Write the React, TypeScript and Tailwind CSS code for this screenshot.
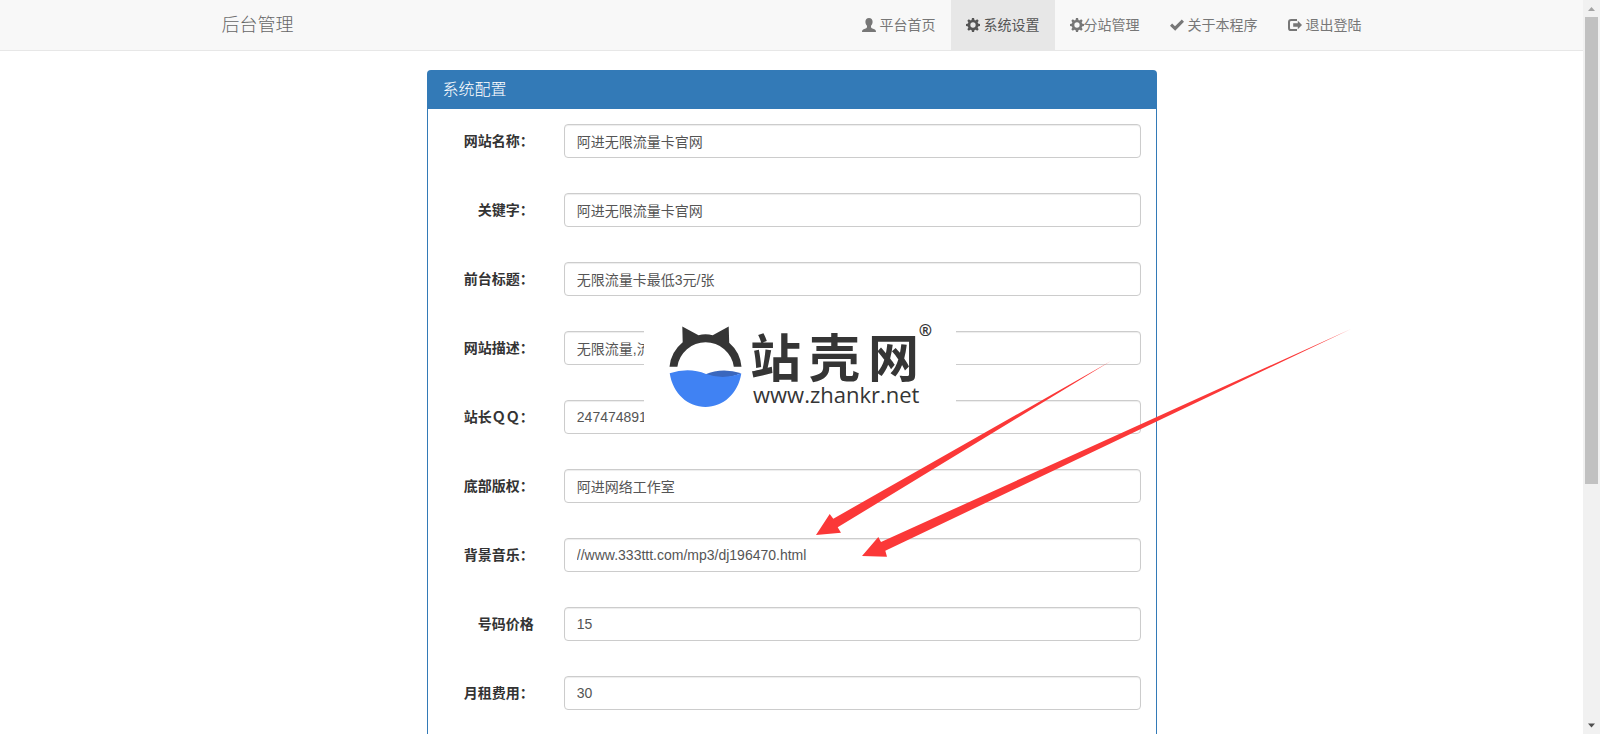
import { useState } from 'react';

type IconProps = { className?: string };

function UserIcon({ className }: IconProps) {
  return (
    <svg viewBox="0 0 14 14" fill="currentColor" className={className} aria-hidden="true">
      <path d="M7 0C9.200 0 10.600 1.500 10.600 3.700C10.600 5.400 9.900 6.800 9 7.700V8.900C9 9.600 9.500 10 10.400 10.400L12.400 11.300C13.500 11.800 14 12.300 14 14H0C0 12.300 .5 11.800 1.600 11.300L3.600 10.400C4.500 10 5 9.600 5 8.900V7.700C4.100 6.800 3.400 5.400 3.400 3.700C3.400 1.500 4.800 0 7 0Z" />
    </svg>
  );
}

function CogIcon({ className }: IconProps) {
  return (
    <svg viewBox="0 0 14 14" className={className} aria-hidden="true">
      <circle cx="7" cy="7" r="4" fill="none" stroke="currentColor" strokeWidth="2.700" />
      <g fill="currentColor">
        {[0, 45, 90, 135, 180, 225, 270, 315].map((angle) => (
          <path key={angle} d="M5.500 2.300L6 0H8L8.500 2.300Z" transform={`rotate(${angle} 7 7)`} />
        ))}
      </g>
    </svg>
  );
}

function CheckIcon({ className }: IconProps) {
  return (
    <svg viewBox="0 0 14 14" fill="currentColor" className={className} aria-hidden="true">
      <path d="M0 7.800L2.100 5.600L5 8.300L11.800 1.500L14 3.700L5.200 12.700Z" />
    </svg>
  );
}

function LogoutIcon({ className }: IconProps) {
  return (
    <svg viewBox="0 0 14 14" className={className} aria-hidden="true">
      <path
        d="M9 1.900H3.200Q1 1.900 1 4.100V9.900Q1 12.100 3.200 12.100H9"
        fill="none"
        stroke="currentColor"
        strokeWidth="2"
      />
      <path d="M9.800 2.700L14 7L9.800 11.300V8.700H5.200V5.300H9.800Z" fill="currentColor" />
    </svg>
  );
}

const navItems = [
  { label: '平台首页', icon: UserIcon, spaced: true },
  { label: '系统设置', icon: CogIcon, spaced: true, active: true },
  { label: '分站管理', icon: CogIcon, spaced: false },
  { label: '关于本程序', icon: CheckIcon, spaced: true },
  { label: '退出登陆', icon: LogoutIcon, spaced: true },
];

const fields = [
  { name: 'sitename', label: '网站名称：', value: '阿进无限流量卡官网' },
  { name: 'keywords', label: '关键字：', value: '阿进无限流量卡官网' },
  { name: 'title', label: '前台标题：', value: '无限流量卡最低3元/张' },
  { name: 'description', label: '网站描述：', value: '无限流量,流量卡' },
  { name: 'qq', label: '站长ＱＱ：', value: '247474891' },
  { name: 'copyright', label: '底部版权：', value: '阿进网络工作室' },
  { name: 'music', label: '背景音乐：', value: '//www.333ttt.com/mp3/dj196470.html' },
  { name: 'price', label: '号码价格', value: '15' },
  { name: 'monthly', label: '月租费用：', value: '30' },
];

function Navbar() {
  return (
    <nav className="border-b border-[#e7e7e7] bg-[#f8f8f8]">
      <div className="mx-auto flex h-[50px] max-w-[1170px] items-stretch justify-between">
        <a href="#" className="flex items-center px-[15px] text-lg leading-5 font-light text-[#666]">
          后台管理
        </a>
        <ul className="flex">
          {navItems.map((item) => (
            <li key={item.label} className="flex">
              <a
                href="#"
                className={`flex items-center px-[15px] leading-5 ${item.spaced ? 'gap-1' : ''} ${
                  item.active ? 'bg-[#e7e7e7] text-[#555]' : 'text-[#777]'
                }`}
              >
                <item.icon className="size-3.5" />
                {item.label}
              </a>
            </li>
          ))}
        </ul>
      </div>
    </nav>
  );
}

function Watermark() {
  return (
    <div className="pointer-events-none absolute top-1/2 left-1/2 flex h-[126px] w-[312px] -translate-x-1/2 -translate-y-1/2 bg-white text-[#353535]">
      <svg viewBox="0 0 106 126" className="h-[126px] w-[106px] shrink-0" aria-hidden="true">
        <path
          d="M25.500 62.700A36.300 36.300 0 0 1 38.700 38.300L38.300 22.500L54.500 31.300Q61.500 29.300 68.700 31.300L84.700 22.500L85.200 38.700A36.300 36.300 0 0 1 97.500 62.700H89.800A28.500 28.500 0 0 0 33.400 62.700Z"
          fill="#353535"
        />
        <path d="M61 70.500Q78 63 97.300 69.300Q80 77 61 70.500Z" fill="#3a67bd" />
        <path
          d="M25.700 69.300Q45 63 62 70Q79 76 97.300 69.600C94 90 79 103 61.500 103C44 103 29 90 25.700 69.300Z"
          fill="#4082f3"
        />
      </svg>
      <div className="flex flex-col">
        <div className="flex h-[78px] items-end gap-2 text-[51px] leading-[44px] font-bold">
          <span>站</span>
          <span>壳</span>
          <span>网</span>
        </div>
        <span className="px-[3px] font-['Open_Sans'] text-[22px] leading-6">www.zhankr.net</span>
      </div>
      <span className="absolute top-4 right-6 font-['Noto_Sans'] text-base leading-5 font-bold">®</span>
    </div>
  );
}

function Arrows() {
  return (
    <svg
      viewBox="0 0 1600 734"
      className="pointer-events-none absolute top-0 left-0 h-[734px] w-[1600px] max-w-none"
      fill="#fb3838"
      aria-hidden="true"
    >
      <path d="M816 535L829.700 514L833.300 518.700L1111 361L837.700 527.300L841 532.700Z" />
      <path d="M862 556L878.300 537L881 542L1351 329L885.300 550.700L887 556.700Z" />
    </svg>
  );
}

function Scrollbar() {
  return (
    <div className="flex w-[17px] shrink-0 flex-col items-center bg-[#f1f1f1]" aria-hidden="true">
      <svg viewBox="0 0 17 17" className="size-[17px]">
        <path d="M5 11L8.500 7L12 11Z" fill="#a3a3a3" />
      </svg>
      <div className="flex w-full flex-1 flex-col px-0.5">
        <div className="h-2/3 bg-[#c1c1c1]" />
      </div>
      <svg viewBox="0 0 17 17" className="size-[17px]">
        <path d="M5 6.500L8.500 10.500L12 6.500Z" fill="#505050" />
      </svg>
    </div>
  );
}

export default function App() {
  const [values, setValues] = useState<Record<string, string>>(
    Object.fromEntries(fields.map((field) => [field.name, field.value]))
  );

  return (
    <div className="relative flex h-screen overflow-hidden bg-white font-['Liberation_Sans','Noto_Sans_CJK_SC',sans-serif] text-sm text-[#333]">
      <div className="flex min-w-0 flex-1 flex-col">
        <Navbar />
        <main className="mx-auto mt-[19px] flex w-full max-w-[730px] flex-1 flex-col rounded-t border border-b-0 border-[#337ab7]">
          <h3 className="bg-[#337ab7] px-[15px] py-2 text-base leading-[22px] font-light text-white">系统配置</h3>
          <form className="flex flex-col gap-[35px] py-[15px]">
            {fields.map((field) => (
              <div key={field.name} className="grid grid-cols-[1fr_5fr]">
                <label htmlFor={field.name} className="px-[15px] pt-[7px] text-right leading-5 font-bold">
                  {field.label}
                </label>
                <div className="px-[15px]">
                  <input
                    id={field.name}
                    type="text"
                    value={values[field.name]}
                    onChange={(e) => setValues({ ...values, [field.name]: e.target.value })}
                    className="block h-[34px] w-full rounded border border-[#ccc] bg-white px-3 py-1.5 leading-5 text-[#555] shadow-[inset_0_1px_1px_rgba(0,0,0,0.075)] outline-none focus:border-[#66afe9]"
                  />
                </div>
              </div>
            ))}
          </form>
        </main>
      </div>
      <Scrollbar />
      <Watermark />
      <Arrows />
    </div>
  );
}
